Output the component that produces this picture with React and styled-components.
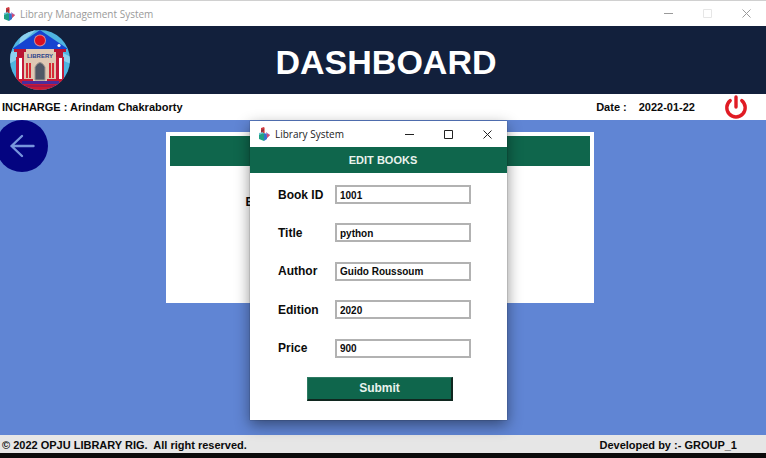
import React from "react";
import styled, { createGlobalStyle } from "styled-components";

const GlobalStyle = createGlobalStyle`
  *, *::before, *::after { box-sizing: border-box; }
  body {
    margin: 0;
    font-family: "Liberation Sans", Arial, sans-serif;
    font-size: 11px;
    font-weight: 700;
    color: #0b0b0b;
  }
`;

const green = "#0f664c";

const Screen = styled.div`
  display: flex;
  flex-direction: column;
  min-height: 100vh;
  background: #6085d4;
`;

const TitleBar = styled.header`
  display: flex;
  align-items: center;
  height: 26px;
  padding: 0 14px 0 ${(p) => (p.$active ? "8px" : "3px")};
  gap: 5px;
  background: #fff;
  border-top: ${(p) => (p.$active ? "0" : "1px solid #d0d0d0")};
  color: ${(p) => (p.$active ? "#222" : "#9a9a9a")};
`;

const TitleText = styled.span`
  flex: 1;
  font-family: "Open Sans", "Noto Sans", sans-serif;
  font-size: 10px;
  font-weight: 400;
  white-space: nowrap;
`;

const WindowControls = styled.div`
  display: flex;
  gap: 28px;
`;

const WindowButton = styled.button`
  display: flex;
  width: 11px;
  height: 11px;
  padding: 0;
  border: 0;
  background: none;
  color: ${(p) => (p.$faint ? "#e6e6e6" : "inherit")};
`;

const Banner = styled.div`
  display: grid;
  grid-template-columns: 80px 1fr 74px;
  align-items: center;
  height: 68px;
  background: #12203c;
`;

const Logo = styled.svg`
  width: 62px;
  height: 62px;
  margin-left: 9px;
`;

const Heading = styled.h1`
  margin: 0;
  padding-top: 4px;
  text-align: center;
  font-size: 34px;
  line-height: 40px;
  color: #fff;
`;

const InfoBar = styled.div`
  display: flex;
  align-items: center;
  height: 26px;
  padding: 0 18px 0 2px;
  background: #fff;
  white-space: pre;
`;

const Incharge = styled.span`
  flex: 1;
`;

const DateValue = styled.time`
  margin: 0 29px 0 12px;
`;

const PowerButton = styled.button`
  display: flex;
  padding: 0;
  border: 0;
  background: none;
`;

const Workspace = styled.main`
  position: relative;
  flex: 1;
  min-height: 315px;
  padding-top: 12px;
`;

const BackButton = styled.button`
  position: absolute;
  top: 0;
  left: -4px;
  width: 52px;
  height: 52px;
  padding: 0;
  border: 0;
  border-radius: 50%;
  background: #040480;
  color: #7795dc;
`;

const Panel = styled.section`
  width: 56%;
  height: 171px;
  margin-left: calc(22% - 3px);
  padding: 4px;
  background: #fff;
`;

const PanelHeader = styled.div`
  height: 30px;
  background: ${green};
`;

const PanelLabel = styled.div`
  padding: 29px 0 0 76px;
  font-size: 12px;
`;

const Dialog = styled.section`
  position: absolute;
  top: 1px;
  left: calc(50% - 133px);
  display: flex;
  flex-direction: column;
  width: 257px;
  min-height: 299px;
  background: #fff;
  box-shadow: 0 5px 14px rgba(0, 0, 0, 0.45), 0 0 1px rgba(0, 0, 0, 0.5);
`;

const DialogHeading = styled.h2`
  margin: 0;
  padding-left: 9px;
  background: ${green};
  color: #e9f3ee;
  text-align: center;
  font-size: 11px;
  line-height: 26px;
`;

const BookForm = styled.form`
  display: flex;
  flex: 1;
  flex-direction: column;
  justify-content: space-between;
  padding: 12px 36px 19px 28px;
  font-size: 12px;
`;

const Field = styled.div`
  display: grid;
  grid-template-columns: 57px 1fr;
  align-items: center;
`;

const TextInput = styled.input`
  width: 100%;
  height: 19px;
  padding: 1px 3px 0;
  border: 2px solid #b2b2b2;
  border-radius: 0;
  outline: 0;
  background: #fff;
  color: #0b0b0b;
  font: 700 10px "Liberation Sans", Arial, sans-serif;
`;

const SubmitButton = styled.button`
  align-self: center;
  width: 146px;
  height: 24px;
  margin-left: 11px;
  padding: 0;
  border: 1px solid;
  border-width: 1px 2px 2px 1px;
  border-color: #2d7a62 #10271f #10271f #2d7a62;
  background: ${green};
  color: #e9f3ee;
  font: 700 12px "Liberation Sans", Arial, sans-serif;
`;

const Footer = styled.footer`
  display: flex;
  justify-content: space-between;
  height: 23px;
  padding: 0 29px 0 2px;
  background: #e6e6e6;
  border-bottom: 5px solid #0b0b0b;
  line-height: 20px;
  white-space: pre;
`;

const AppIcon = () => (
  <svg width="12" height="14" viewBox="0 0 12 14" aria-hidden="true">
    <path d="M3 1l3-1v6H3z" fill="#cf3b41" />
    <path d="M3 3l3-1v2L3 5z" fill="#8d3540" />
    <path d="M6 0l1 1v5H6z" fill="#ec8f86" />
    <path d="M1 6l4-1v3L1 9z" fill="#6cc4d4" />
    <path d="M1 8l5-2v8l-5-2z" fill="#1fa184" />
    <path d="M6 6l3 1v5l-3 2z" fill="#3474cc" />
    <path d="M8 5l4 3-3 3z" fill="#9b6fc0" />
    <path d="M9 7l3 1-3 3z" fill="#d9486b" />
  </svg>
);

const Controls = ({ faintMaximize }) => (
  <WindowControls>
    <WindowButton type="button" aria-label="Minimize">
      <svg width="11" height="11"><path d="M1 5.5h9" stroke="currentColor" /></svg>
    </WindowButton>
    <WindowButton type="button" aria-label="Maximize" $faint={faintMaximize}>
      <svg width="11" height="11"><path d="M1.5 1.5h8v8h-8z" fill="none" stroke="currentColor" /></svg>
    </WindowButton>
    <WindowButton type="button" aria-label="Close">
      <svg width="11" height="11"><path d="M1.5 1.5l8 8m0-8l-8 8" stroke="currentColor" /></svg>
    </WindowButton>
  </WindowControls>
);

const LibraryLogo = () => (
  <Logo viewBox="0 0 62 62" role="img" aria-label="Library">
    <defs>
      <clipPath id="disc"><circle cx="31" cy="31" r="30" /></clipPath>
    </defs>
    <g clipPath="url(#disc)">
      <path d="M0 0h62v62H0z" fill="#4fb4e0" />
      <path d="M0 24l12-5v9L0 35zM50 22l12 6v7l-12-5zM12 5l16-5-18 16z" fill="#8cd0ee" />
      <path d="M12 20h38v34H12z" fill="#dec9b4" />
      <path d="M31 1L3 20h56z" fill="#1644d0" />
      <circle cx="31" cy="11.5" r="6" fill="#d98a92" />
      <circle cx="31" cy="11.5" r="5" fill="#d90f22" />
      <circle cx="50" cy="16.5" r="1.6" fill="#fff" />
      <path d="M5 20h12v3h-2v5H8v-5H5zM45 20h12v3h-3v5h-7v-5h-2z" fill="#b81432" />
      <path d="M7 28h8v24H7zM47 28h8v24h-8z" fill="#c51b39" />
      <path d="M10 29h3v21h-3zM50 29h3v21h-3z" fill="#fff" />
      <path d="M17 34h2v15h-2zM20 34h2v15h-2zM40 34h2v15h-2zM43 34h2v15h-2z" fill="#d52c36" />
      <path d="M26 51V38q5-9 10 0v13z" fill="#4f5866" stroke="#9f968f" />
      <path d="M0 50h24v2h14v-2h24v12H0z" fill="#c91834" />
      <path d="M13 52h37v3H13z" fill="#4b2d9c" />
      <path d="M17 57h29" stroke="#741a67" strokeWidth="1" />
      <text x="31" y="29" textAnchor="middle" fontFamily="Liberation Sans, sans-serif" fontSize="6" fontWeight="700" fill="#2c438b">LIBRERY</text>
    </g>
  </Logo>
);

const fields = [
  { id: "book-id", label: "Book ID", value: "1001" },
  { id: "title", label: "Title", value: "python" },
  { id: "author", label: "Author", value: "Guido Roussoum" },
  { id: "edition", label: "Edition", value: "2020" },
  { id: "price", label: "Price", value: "900" },
];

export default function App() {
  return (
    <Screen>
      <GlobalStyle />
      <TitleBar>
        <AppIcon />
        <TitleText>Library Management System</TitleText>
        <Controls faintMaximize />
      </TitleBar>
      <Banner>
        <LibraryLogo />
        <Heading>DASHBOARD</Heading>
      </Banner>
      <InfoBar>
        <Incharge>INCHARGE : Arindam Chakraborty</Incharge>
        <span>Date :</span>
        <DateValue dateTime="2022-01-22">2022-01-22</DateValue>
        <PowerButton type="button" aria-label="Log out">
          <svg width="24" height="24" viewBox="0 0 24 24" fill="none" stroke="#e01b24" strokeWidth="3.4" strokeLinecap="round">
            <path d="M12 2v10M6.2 5.6a9.2 9.2 0 1 0 11.6 0" />
          </svg>
        </PowerButton>
      </InfoBar>
      <Workspace>
        <BackButton type="button" aria-label="Back">
          <svg width="52" height="52" viewBox="0 0 52 52" fill="none" stroke="currentColor" strokeWidth="2.4" strokeLinecap="round" strokeLinejoin="round">
            <path d="M26 16L15.5 26 26 36M15.5 26H37.5" />
          </svg>
        </BackButton>
        <Panel>
          <PanelHeader />
          <PanelLabel>B</PanelLabel>
        </Panel>
        <Dialog role="dialog" aria-labelledby="dialog-heading">
          <TitleBar as="div" $active>
            <AppIcon />
            <TitleText>Library System</TitleText>
            <Controls />
          </TitleBar>
          <DialogHeading id="dialog-heading">EDIT BOOKS</DialogHeading>
          <BookForm onSubmit={(e) => e.preventDefault()}>
            {fields.map((f) => (
              <Field key={f.id}>
                <label htmlFor={f.id}>{f.label}</label>
                <TextInput id={f.id} defaultValue={f.value} />
              </Field>
            ))}
            <SubmitButton type="submit">Submit</SubmitButton>
          </BookForm>
        </Dialog>
      </Workspace>
      <Footer>
        <span>© 2022 OPJU LIBRARY RIG.  All right reserved.</span>
        <span>Developed by :- GROUP_1</span>
      </Footer>
    </Screen>
  );
}
